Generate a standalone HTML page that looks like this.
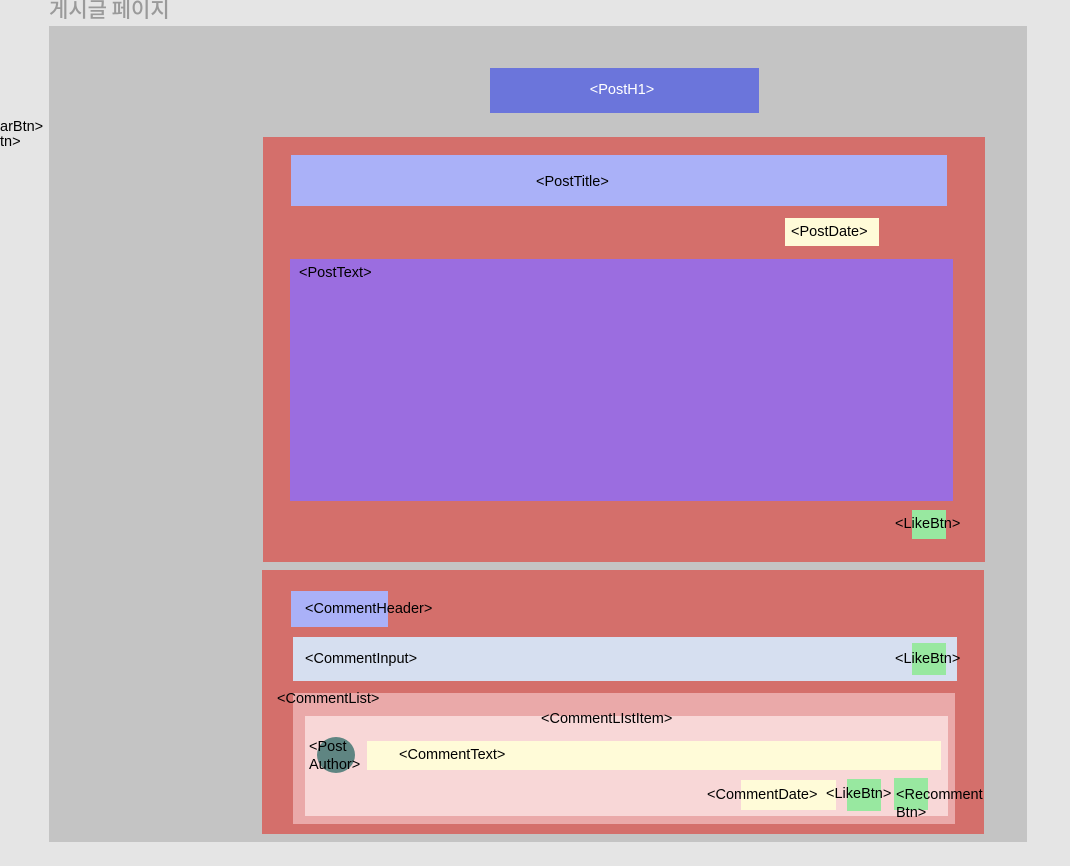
<!DOCTYPE html>
<html><head><meta charset="utf-8"><style>
*{margin:0;padding:0;box-sizing:border-box}
body{width:1070px;height:866px;background:#e5e5e5;position:relative;overflow:hidden;font-family:"Liberation Sans","Noto Sans CJK KR",sans-serif;font-size:14.5px;color:#000;letter-spacing:0}
.a{position:absolute}
.t{position:absolute;white-space:nowrap;line-height:16px}
</style></head><body>
<div class="t" style="left:49px;top:-4px;font-size:21px;line-height:26px;color:#9a9a9a;font-family:'Noto Sans CJK KR',sans-serif;font-weight:500">게시글 페이지</div>
<div class="t" style="left:0;top:119px">arBtn&gt;</div>
<div class="t" style="left:0;top:134px">tn&gt;</div>
<div class="a" style="left:49px;top:26px;width:978px;height:816px;background:#c4c4c4"></div>
<div class="a" style="left:490px;top:68px;width:269px;height:45px;background:#6b75db"></div>
<div class="t" style="left:490px;top:82px;width:264px;text-align:center;color:#fff">&lt;PostH1&gt;</div>

<div class="a" style="left:263px;top:137px;width:722px;height:425px;background:#d46f6b"></div>
<div class="a" style="left:291px;top:155px;width:656px;height:51px;background:#aab1f8"></div>
<div class="t" style="left:536px;top:174px">&lt;PostTitle&gt;</div>
<div class="a" style="left:785px;top:218px;width:94px;height:28px;background:#fffbd8"></div>
<div class="t" style="left:791px;top:224px">&lt;PostDate&gt;</div>
<div class="a" style="left:290px;top:259px;width:663px;height:242px;background:#9b6de0"></div>
<div class="t" style="left:299px;top:265px">&lt;PostText&gt;</div>
<div class="a" style="left:912px;top:510px;width:34px;height:29px;background:#98e8a0"></div>
<div class="t" style="left:895px;top:516px">&lt;LikeBtn&gt;</div>

<div class="a" style="left:262px;top:570px;width:722px;height:264px;background:#d46f6b"></div>
<div class="a" style="left:291px;top:591px;width:97px;height:36px;background:#aab1f8"></div>
<div class="t" style="left:305px;top:601px">&lt;CommentHeader&gt;</div>
<div class="a" style="left:293px;top:637px;width:664px;height:44px;background:#d6dff0"></div>
<div class="t" style="left:305px;top:651px">&lt;CommentInput&gt;</div>
<div class="a" style="left:912px;top:643px;width:34px;height:32px;background:#98e8a0"></div>
<div class="t" style="left:895px;top:651px">&lt;LikeBtn&gt;</div>
<div class="a" style="left:293px;top:693px;width:662px;height:131px;background:#eaa9a9"></div>
<div class="t" style="left:277px;top:691px">&lt;CommentList&gt;</div>
<div class="a" style="left:305px;top:716px;width:643px;height:100px;background:#f8d7d7"></div>
<div class="t" style="left:541px;top:711px">&lt;CommentLIstItem&gt;</div>
<div class="a" style="left:317px;top:737px;width:38px;height:36px;border-radius:50%;background:#5f8582"></div>
<div class="t" style="left:309px;top:738px;line-height:18px">&lt;Post<br>Author&gt;</div>
<div class="a" style="left:367px;top:741px;width:574px;height:29px;background:#fffbd8"></div>
<div class="t" style="left:399px;top:747px">&lt;CommentText&gt;</div>
<div class="a" style="left:741px;top:780px;width:95px;height:30px;background:#fffbd8"></div>
<div class="t" style="left:707px;top:787px">&lt;CommentDate&gt;</div>
<div class="a" style="left:847px;top:779px;width:34px;height:32px;background:#98e8a0"></div>
<div class="t" style="left:826px;top:786px">&lt;LikeBtn&gt;</div>
<div class="a" style="left:894px;top:778px;width:34px;height:32px;background:#98e8a0"></div>
<div class="t" style="left:896px;top:786px;line-height:18px">&lt;Recomment<br>Btn&gt;</div>
</body></html>
